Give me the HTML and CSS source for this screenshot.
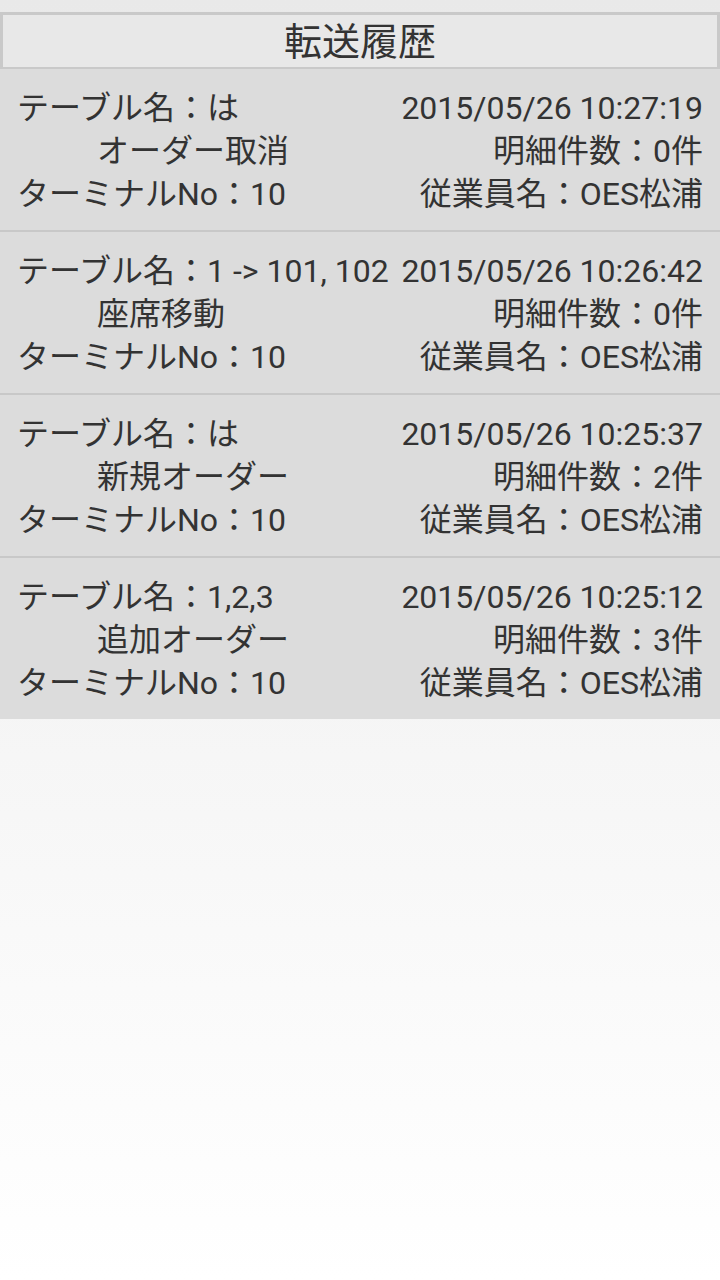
FILE: index.html
```html
<!DOCTYPE html>
<html lang="ja">
<head>
  <meta charset="UTF-8">
  <meta name="viewport" content="width=device-width, initial-scale=1.0">
  <title>転送履歴</title>
  <link rel="stylesheet" href="styles.css">
</head>
<body>
  <h1 class="title">転送履歴</h1>

  <ul class="history">
    <li class="entry">
      <div class="row"><span>テーブル名：は</span><span>2015/05/26 10:27:19</span></div>
      <div class="row"><span class="kind">オーダー取消</span><span>明細件数：0件</span></div>
      <div class="row"><span>ターミナルNo：10</span><span>従業員名：OES松浦</span></div>
    </li>
    <li class="entry">
      <div class="row"><span>テーブル名：1 -&gt; 101, 102</span><span>2015/05/26 10:26:42</span></div>
      <div class="row"><span class="kind">座席移動</span><span>明細件数：0件</span></div>
      <div class="row"><span>ターミナルNo：10</span><span>従業員名：OES松浦</span></div>
    </li>
    <li class="entry">
      <div class="row"><span>テーブル名：は</span><span>2015/05/26 10:25:37</span></div>
      <div class="row"><span class="kind">新規オーダー</span><span>明細件数：2件</span></div>
      <div class="row"><span>ターミナルNo：10</span><span>従業員名：OES松浦</span></div>
    </li>
    <li class="entry">
      <div class="row"><span>テーブル名：1,2,3</span><span>2015/05/26 10:25:12</span></div>
      <div class="row"><span class="kind">追加オーダー</span><span>明細件数：3件</span></div>
      <div class="row"><span>ターミナルNo：10</span><span>従業員名：OES松浦</span></div>
    </li>
  </ul>
</body>
</html>
```

FILE: styles.css
```css
html {
  min-height: 100%;
  background: linear-gradient(#e9e9e9, #ffffff);
}

body {
  font-family: Roboto, "Noto Sans CJK JP", sans-serif;
  margin: 0;
  padding-top: 12px;
  color: #333;
}

.title {
  margin: 0;
  height: 50px;
  padding-top: 2px;
  box-sizing: content-box;
  line-height: 50px;
  border: 3px solid #c9c9c9;
  border-bottom-width: 2px;
  background: #e8e8e8;
  text-align: center;
  font-size: 38px;
  font-weight: normal;
}

.history {
  list-style: none;
  margin: 0;
  padding: 0;
}

.entry {
  background: #dcdcdc;
  padding: 18px 17px 14px 17px;
}

.entry + .entry {
  border-top: 2px solid #c8c8c8;
}

.row {
  display: flex;
  justify-content: space-between;
  font-size: 32px;
  line-height: 43px;
  white-space: nowrap;
}

.row .kind {
  padding-left: 80px;
}
```
